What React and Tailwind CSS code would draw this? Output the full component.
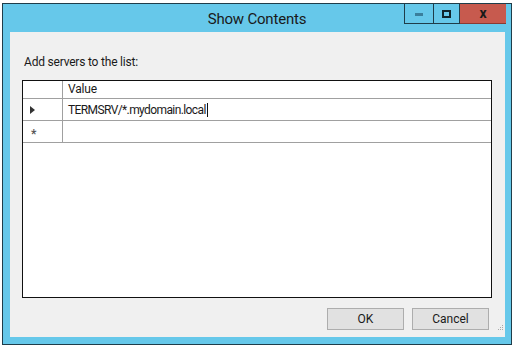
export default function App() {
  const font = { fontFamily: 'Roboto, "Noto Sans", sans-serif' };
  return (
    <div className="w-[512px] h-[345px] bg-white pl-[2px] pt-[3px] overflow-hidden" style={font}>
      {/* WINDOW */}
      <div className="w-[510px] h-[342px] bg-[#66c8ea] border border-[#1f3d4a] flex flex-col">
        {/* TITLE BAR */}
        <div className="h-[28px] flex items-start relative">
          <div className="flex-1 text-center text-[15px] tracking-[-0.2px] text-[#1a1a1a] pt-[5px] leading-[20px]">Show Contents</div>
          <div className="absolute right-[5px] top-0 flex h-[20px]">
            <div className="w-[30px] border border-t-0 border-[#1f3d4a] flex items-center justify-center">
              <div className="w-[8px] h-[3px] bg-[#3a7f9c] mt-[2px]" />
            </div>
            <div className="w-[26px] border border-t-0 border-l-0 border-[#1f3d4a] flex items-center justify-center">
              <div className="w-[9px] h-[8px] border-2 border-[#10242c]" />
            </div>
            <div className="w-[46px] bg-[#c75a4e] border-b border-[#8a3a33] flex items-center justify-center text-[14px] font-bold text-[#1a1a1a] leading-none pb-[2px]">
              x
            </div>
          </div>
        </div>
        {/* CLIENT */}
        <div className="ml-[7px] mr-[6px] h-[305px] bg-[#f0f0f0] flex flex-col">
          <div className="pl-[14px] pt-[22px] text-[12px] tracking-[-0.2px] text-[#1a1a1a] leading-[16px]">Add servers to the list:</div>
          <div className="ml-[12px] mt-[10px] w-[470px] h-[218px] bg-white border border-[#111] flex flex-col">
            <div className="flex h-[18px] bg-white border-b border-[#a0a0a0] text-[12px] tracking-[-0.2px] text-[#1a1a1a]">
              <div className="w-[40px] border-r border-[#a0a0a0]" />
              <div className="flex-1 pl-[5px] leading-[16px]">Value</div>
            </div>
            <div className="flex h-[22px] border-b border-[#a0a0a0] text-[12px] tracking-[-0.6px] text-[#1a1a1a]">
              <div className="w-[40px] border-r border-[#a0a0a0] flex items-center pl-[7px]">
                <div className="w-0 h-0 border-y-[4px] border-y-transparent border-l-[5px] border-l-[#333]" />
              </div>
              <div className="flex-1 pl-[5px] flex items-center">
                <span>TERMSRV/*.mydomain.local</span>
                <span className="w-[1px] h-[14px] bg-[#111] ml-[1px]" />
              </div>
            </div>
            <div className="flex h-[22px] border-b border-[#a0a0a0] text-[#555]">
              <div className="w-[40px] border-r border-[#a0a0a0] flex items-center pl-[8px] pt-[5px] text-[12px] font-bold">*</div>
              <div className="flex-1" />
            </div>
          </div>
          <div className="flex justify-end gap-[8px] mt-[10px] pr-[16px] relative">
            <button className="w-[77px] h-[22px] bg-[#e1e1e1] border border-[#adadad] text-[12px] text-[#1a1a1a]">OK</button>
            <button className="w-[77px] h-[22px] bg-[#e1e1e1] border border-[#adadad] text-[12px] text-[#1a1a1a]">Cancel</button>
            <div className="absolute right-[2px] top-[17px] grid grid-cols-3 gap-[1px]">
              <span className="w-[1px] h-[1px]" />
              <span className="w-[1px] h-[1px]" />
              <span className="w-[1px] h-[1px] bg-[#a8a8a8]" />
              <span className="w-[1px] h-[1px]" />
              <span className="w-[1px] h-[1px] bg-[#a8a8a8]" />
              <span className="w-[1px] h-[1px] bg-[#a8a8a8]" />
              <span className="w-[1px] h-[1px] bg-[#a8a8a8]" />
              <span className="w-[1px] h-[1px] bg-[#a8a8a8]" />
              <span className="w-[1px] h-[1px] bg-[#a8a8a8]" />
            </div>
          </div>
        </div>
      </div>
    </div>
  );
}
